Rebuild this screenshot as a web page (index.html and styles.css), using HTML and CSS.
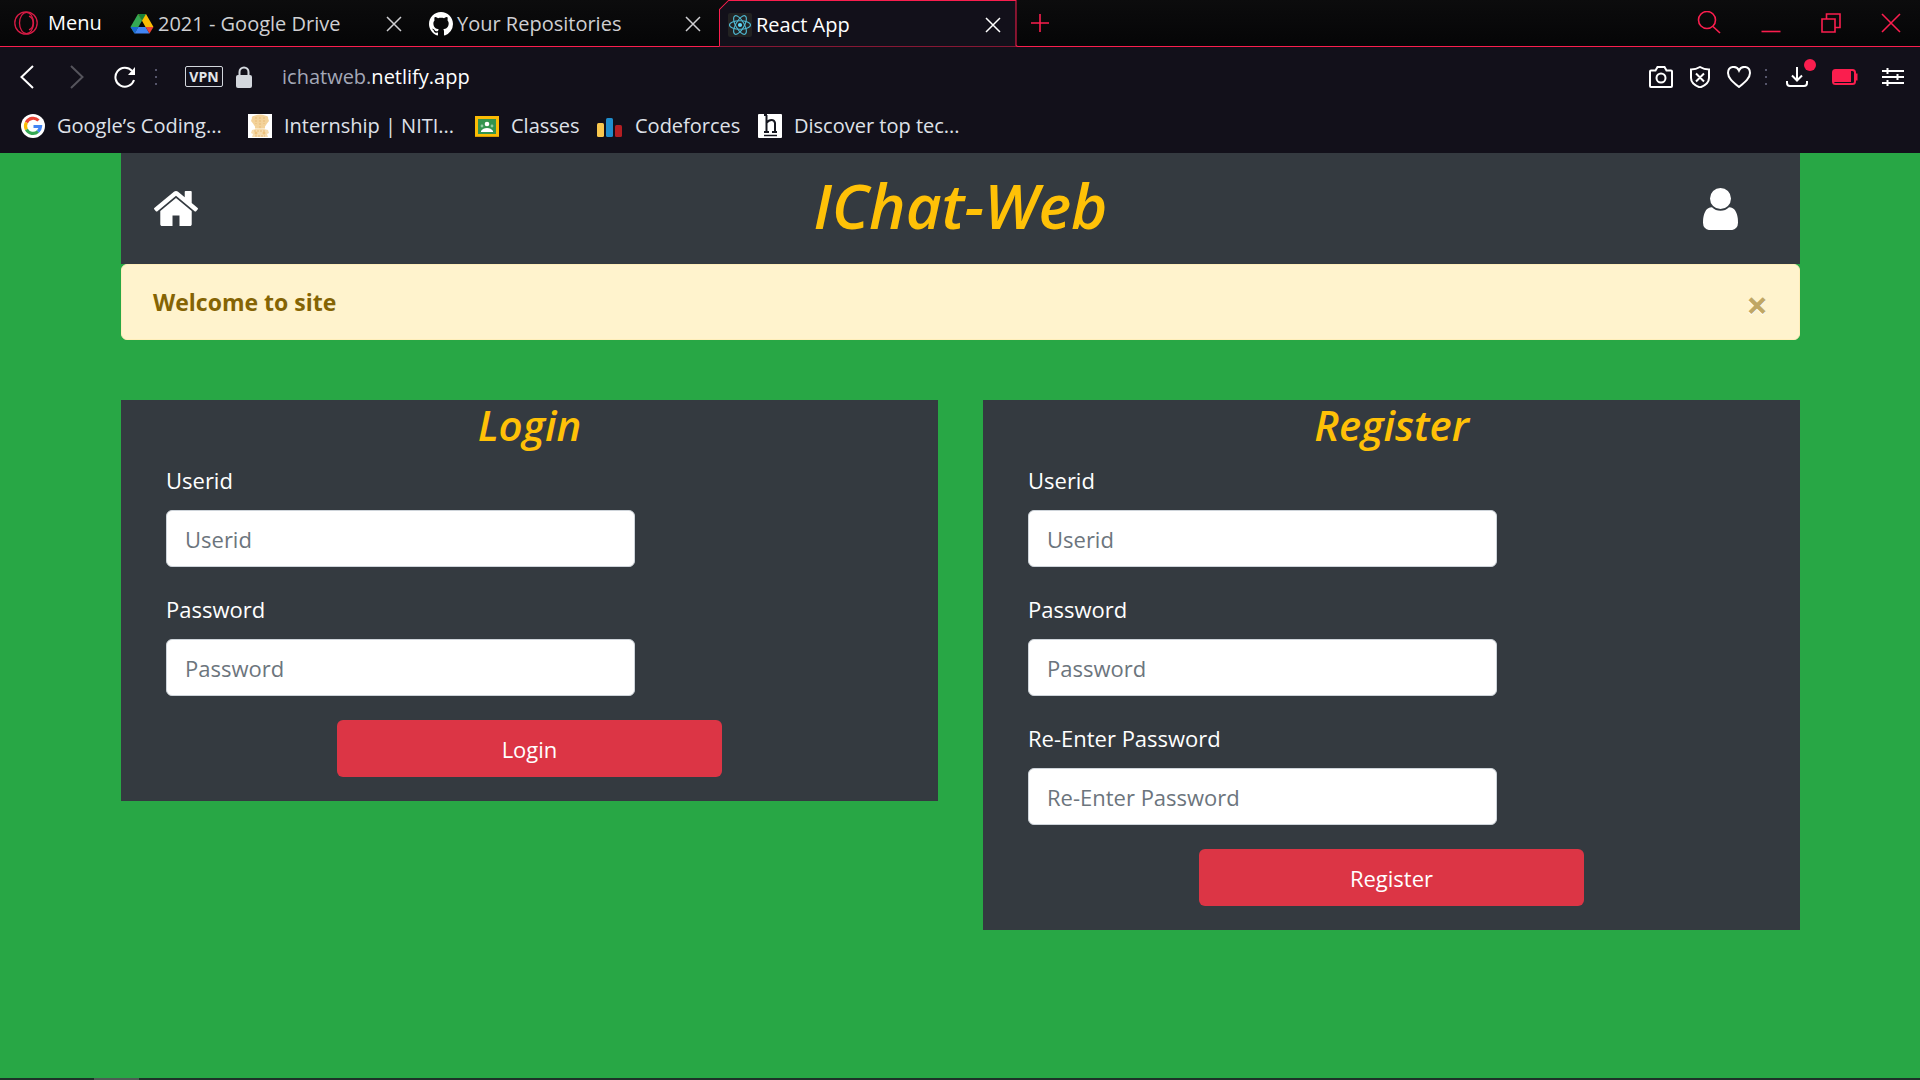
FILE: index.html
```html
<!DOCTYPE html>
<html lang="en">
<head>
<meta charset="utf-8">
<title>React App</title>
<link rel="stylesheet" href="styles.css">
</head>
<body>
<header class="browser">
  <div class="tabstrip">
    <button class="menu" type="button">
      <svg width="24" height="24" viewBox="0 0 24 24" fill="none" stroke="#d81b45" stroke-width="1.3"><circle cx="12" cy="12" r="11.2"/><ellipse cx="12.5" cy="12" rx="7" ry="10.6"/><path d="M15 5.2c5.500 2 5.500 11.600 0 13.600"/></svg>
      <span>Menu</span>
    </button>
    <div class="tab">
      <svg width="24" height="24" viewBox="0 0 24 24"><path d="M8 2h8l-4 6.800z" fill="#188038"/><path d="M8 2l4 6.800L4.500 21.500.500 15z" fill="#34a853"/><path d="M16 2l7.500 13h-8L12 8.800 8 2z" fill="#fbbc04"/><path d="M8 2h8l-4 6.800z" fill="#188038"/><path d="M8.300 15h7.300l3.900 6.500h-15z" fill="#4285f4"/><path d="M.5 15h7.800l-3.800 6.500z" fill="#1967d2"/><path d="M15.600 15h7.900l-4 6.500z" fill="#ea4335"/></svg>
      <span class="tab-title">2021 - Google Drive</span>
      <button class="tab-close" type="button" aria-label="Close tab"><svg width="16" height="16" viewBox="0 0 16 16"><path d="M1 1l14 14M15 1L1 15"/></svg></button>
    </div>
    <div class="tab">
      <svg width="24" height="24" viewBox="0 0 16 16" fill="#fff"><path d="M8 0C3.580 0 0 3.580 0 8c0 3.540 2.290 6.530 5.470 7.590.4.070.55-.17.55-.38 0-.19-.01-.82-.01-1.490-2.010.37-2.530-.49-2.690-.94-.09-.23-.48-.94-.82-1.130-.28-.15-.68-.52-.01-.53.63-.01 1.080.58 1.230.82.72 1.210 1.870.87 2.330.66.07-.52.28-.87.51-1.070-1.780-.2-3.640-.89-3.640-3.950 0-.87.31-1.590.82-2.150-.08-.2-.36-1.020.08-2.120 0 0 .67-.21 2.200.82.64-.18 1.320-.27 2-.27s1.360.09 2 .27c1.530-1.040 2.200-.82 2.200-.82.44 1.100.16 1.920.08 2.120.51.56.82 1.270.82 2.150 0 3.070-1.870 3.750-3.650 3.950.29.25.54.73.54 1.480 0 1.070-.01 1.930-.01 2.200 0 .21.15.46.55.38A8.010 8.010 0 0 0 16 8c0-4.420-3.580-8-8-8z"/></svg>
      <span class="tab-title">Your Repositories</span>
      <button class="tab-close" type="button" aria-label="Close tab"><svg width="16" height="16" viewBox="0 0 16 16"><path d="M1 1l14 14M15 1L1 15"/></svg></button>
    </div>
    <div class="tab tab-active">
      <svg class="tab-edge" viewBox="0 0 298 47" preserveAspectRatio="none" aria-hidden="true"><path d="M0 46.500V46.500l.5-1V9.500L9.500.500h286.500V45.500l1.500 1" fill="#12101a" stroke="#fa1e4e"/></svg>
      <svg width="24" height="24" viewBox="0 0 24 24" fill="none" stroke="#4fb9d3" stroke-width="1.100"><rect width="24" height="24" rx="2" fill="#222" stroke="none"/><ellipse cx="12" cy="12" rx="10.500" ry="4.200"/><ellipse cx="12" cy="12" rx="10.500" ry="4.200" transform="rotate(60 12 12)"/><ellipse cx="12" cy="12" rx="10.500" ry="4.200" transform="rotate(120 12 12)"/><circle cx="12" cy="12" r="2.100" fill="#61dafb" stroke="none"/></svg>
      <span class="tab-title">React App</span>
      <button class="tab-close" type="button" aria-label="Close tab"><svg width="16" height="16" viewBox="0 0 16 16"><path d="M1 1l14 14M15 1L1 15"/></svg></button>
    </div>
    <button class="new-tab" type="button" aria-label="New tab"><svg width="20" height="20" viewBox="0 0 20 20"><path d="M10 1v18M1 10h18"/></svg></button>
    <div class="window-controls">
      <button type="button" aria-label="Search tabs"><svg width="24" height="24" viewBox="0 0 24 24"><circle cx="10" cy="9" r="8.500"/><path d="M16 15.500l7 6.500"/></svg></button>
      <button type="button" aria-label="Minimize"><svg width="20" height="20" viewBox="0 0 20 20"><path d="M.5 18.500h19"/></svg></button>
      <button type="button" aria-label="Restore"><svg width="20" height="20" viewBox="0 0 20 20"><path d="M1 6h13v13H1zM5.500 6V1H19v13.500h-5"/></svg></button>
      <button type="button" aria-label="Close"><svg width="20" height="20" viewBox="0 0 20 20"><path d="M1 1l18 18M19 1L1 19"/></svg></button>
    </div>
  </div>

  <div class="toolbar">
    <button class="back" type="button" aria-label="Back"><svg width="14" height="24" viewBox="0 0 14 24"><path d="M13 1L1.500 12 13 23"/></svg></button>
    <button class="forward" type="button" aria-label="Forward"><svg width="14" height="24" viewBox="0 0 14 24"><path d="M1 1l11.500 11L1 23"/></svg></button>
    <button class="reload" type="button" aria-label="Reload"><svg width="22" height="22" viewBox="0 0 22 22"><path d="M18 4.800A9.500 9.500 0 1 0 20 14"/><path d="M21 1v8h-7z" fill="#fff" stroke="none"/></svg></button>
    <span class="dots"></span>
    <button class="vpn" type="button">VPN</button>
    <svg width="16" height="22" viewBox="0 0 16 22" fill="none"><rect y="9" width="16" height="13" rx="2" fill="#d3d7dd"/><path d="M3.500 10V6a4.500 4.500 0 0 1 9 0v4" stroke="#d3d7dd" stroke-width="2"/></svg>
    <a class="address" href="#">ichatweb.<span class="domain">netlify.app</span></a>
    <div class="tools">
      <button type="button" aria-label="Snapshot"><svg width="24" height="22" viewBox="0 0 24 22"><path d="M2 4.500h4.500L8.500 1h7l2 3.500H22q1 0 1 1V20q0 1-1 1H2q-1 0-1-1V5.500q0-1 1-1z"/><circle cx="12" cy="12" r="4.500"/></svg></button>
      <button type="button" aria-label="Ad blocker"><svg width="20" height="22" viewBox="0 0 20 22"><path d="M10 1q4 2.500 9 2.500V12q0 6-9 9.500Q1 18 1 12V3.500Q6 3.500 10 1zM6 7.500l8 8M14 7.500l-8 8"/></svg></button>
      <button type="button" aria-label="Bookmark"><svg width="24" height="22" viewBox="0 0 24 22"><path d="M12 21C6 16 1 12 1 7c0-7 8.500-8 11-2.500C14.500-1 23 0 23 7c0 5-5 9-11 14z"/></svg></button>
      <span class="dots"></span>
      <button class="downloads" type="button" aria-label="Downloads"><svg width="22" height="20" viewBox="0 0 22 20"><path d="M11 0v13M6 8.500l5 5 5-5M1 14v2q0 3 3 3h14q3 0 3-3v-2"/></svg></button>
      <button type="button" aria-label="Battery saver"><svg width="26" height="16" viewBox="0 0 26 16"><rect x="1" y="1" width="22" height="14" rx="2.500" stroke="#fa1e4e"/><path d="M2 2h17v11H2z" fill="#fa1e4e" stroke="none"/><path d="M24 4.500v7" stroke="#fa1e4e" stroke-width="3"/></svg></button>
      <button type="button" aria-label="Easy setup"><svg width="22" height="20" viewBox="0 0 22 20"><path d="M0 4h22M0 10h22M0 16h22M5.500 1v6M15.500 7v6M5.500 13v6"/></svg></button>
    </div>
  </div>

  <nav class="bookmarks" aria-label="Bookmarks">
    <a href="#"><svg width="24" height="24" viewBox="0 0 24 24" fill="none" stroke-width="3.200"><circle cx="12" cy="12" r="12" fill="#fff"/><path d="M17.500 6.500A7.500 7.500 0 0 0 5.400 8.500" stroke="#ea4335"/><path d="M5.400 8.500a7.500 7.500 0 0 0 0 7" stroke="#fbbc05"/><path d="M5.400 15.500a7.500 7.500 0 0 0 11.600 2" stroke="#34a853"/><path d="M17 17.500a7.500 7.500 0 0 0 2.500-5H12.500" stroke="#4285f4"/></svg><span>Google’s Coding...</span></a>
    <a href="#"><svg width="24" height="24" viewBox="0 0 24 24"><path fill="#fff" d="M0 0h24v24H0z"/><path fill="#f3d29a" d="M4 4q-1-2 3-2.500Q12-.5 17 1.500q4 .5 3 2.500l1 3-2 2.500-2 3v2H7v-2l-2-3L3 7z"/><path fill="#f6dcae" d="M4 16q8-3 16 0l1 3-2 1 1 3H4l1-3-2-1z"/><path d="M8 3v7M12 3v11M16 3v7M6 17h12M7 22h10" stroke="#e8bb78" stroke-dasharray="2 1" fill="none"/><circle cx="8" cy="19" r="1.500" fill="#eec17c"/><circle cx="16" cy="19" r="1.500" fill="#eec17c"/></svg><span>Internship | NITI...</span></a>
    <a href="#"><svg width="24" height="24" viewBox="0 0 24 24"><path fill="#fbbc04" d="M0 2h24v21H0z"/><path fill="#34944f" d="M3 5h18v15H3z"/><circle cx="12" cy="10" r="2.300" fill="#fff"/><circle cx="7" cy="12" r="1.400" fill="#8fcba0"/><circle cx="17" cy="12" r="1.400" fill="#8fcba0"/><path fill="#fff" d="M6 18v-1q2-3 6-3t6 3v1z"/><path fill="#d99a00" d="M0 22h24v1H0z"/></svg><span>Classes</span></a>
    <a href="#"><svg width="26" height="24" viewBox="0 0 26 24"><rect y="9" width="7" height="14" rx="1.500" fill="#f8c74e"/><rect x="9" y="4" width="7" height="19" rx="1.500" fill="#1f8dcc"/><rect x="18" y="11" width="7" height="12" rx="1.500" fill="#b41e22"/></svg><span>Codeforces</span></a>
    <a href="#"><svg width="24" height="24" viewBox="0 0 24 24" fill="none" stroke="#15161f"><rect width="24" height="24" rx="1" fill="#fff" stroke="none"/><path d="M6 1h3M8.500 1v17M6 18h5M8.500 9q2-3 5-3t3.500 3v9M14 18h5" stroke-width="2"/><path d="M6 21.500h13" stroke-width="1.500"/></svg><span>Discover top tec...</span></a>
  </nav>
</header>

<main class="page">
  <header class="site-header">
    <a href="#" aria-label="Home"><svg width="44" height="35" viewBox="26 253 1612 1283" fill="#fff"><path d="M1408 992v480q0 26-19 45t-45 19h-384v-384h-256v384h-384q-26 0-45-19t-19-45v-480q0-1 .5-3t.5-3l575-474 575 474q1 2 1 6zm223-69l-62 74q-8 9-21 11h-3q-13 0-21-7l-692-577-692 577q-12 8-24 7-13-2-21-11l-62-74q-8-10-7-23.500t11-21.500l719-599q32-26 76-26t76 26l244 204v-195q0-14 9-23t23-9h192q14 0 23 9t9 23v408l219 182q10 8 11 21.500t-7 23.500z"/></svg></a>
    <h1>IChat-Web</h1>
    <a class="account" href="#" aria-label="Account"><svg width="35" height="42" viewBox="0 128 1280 1536" fill="#fff"><path d="M1280 1399q0 109-62.500 187t-150.500 78h-854q-88 0-150.500-78t-62.500-187q0-85 8.500-160.500t31.500-152 58.500-131 94-89 134.500-34.500q131 128 313 128t313-128q76 0 134.500 34.500t94 89 58.500 131 31.500 152 8.500 160.500zm-256-887q0 159-112.500 271.500t-271.500 112.500-271.500-112.500-112.500-271.500 112.500-271.500 271.500-112.500 271.500 112.500 112.500 271.500z"/></svg></a>
  </header>

  <div class="alert" role="alert">
    <strong>Welcome to site</strong>
    <button class="alert-close" type="button" aria-label="Close">×</button>
  </div>

  <div class="cards">
    <form class="card">
      <h2>Login</h2>
      <div class="field"><label for="login-id">Userid</label><input id="login-id" type="text" placeholder="Userid"></div>
      <div class="field"><label for="login-pw">Password</label><input id="login-pw" type="password" placeholder="Password"></div>
      <button class="submit" type="button">Login</button>
    </form>
    <form class="card">
      <h2>Register</h2>
      <div class="field"><label for="reg-id">Userid</label><input id="reg-id" type="text" placeholder="Userid"></div>
      <div class="field"><label for="reg-pw">Password</label><input id="reg-pw" type="password" placeholder="Password"></div>
      <div class="field"><label for="reg-pw2">Re-Enter Password</label><input id="reg-pw2" type="password" placeholder="Re-Enter Password"></div>
      <button class="submit" type="button">Register</button>
    </form>
  </div>
</main>
<footer class="taskbar"><span class="taskbar-item"></span></footer>
</body>
</html>
```
FILE: styles.css
```css
* { box-sizing: border-box; }

body {
  margin: 0;
  min-height: 100vh;
  display: flex;
  flex-direction: column;
  background: #28a745;
  color: #fff;
  font-family: "Open Sans", "Noto Sans", sans-serif;
  font-size: 22px;
  line-height: 36px;
}

button {
  padding: 0;
  border: 0;
  background: none;
  color: inherit;
  font: inherit;
}

a { color: inherit; text-decoration: none; }
svg { display: block; flex: none; }

/* Browser window */
.browser {
  background: #12101a;
  font-size: 20px;
  line-height: 28px;
  white-space: nowrap;
}

.tabstrip {
  display: flex;
  height: 47px;
  background: linear-gradient(#0c0c0d, #050506);
  border-bottom: 1px solid #fa1e4e;
}

.menu {
  display: flex;
  align-items: center;
  gap: 10px;
  width: 121px;
  padding-left: 14px;
}

.tab {
  position: relative;
  display: flex;
  align-items: center;
  gap: 4px;
  width: 299px;
  padding: 2px 18px 0 9px;
  color: #cfcfd2;
}

.tab-active { height: 47px; padding-right: 17px; color: #fff; }
.tab-edge { position: absolute; inset: 0; width: 100%; height: 47px; }
.tab-active > :not(.tab-edge) { position: relative; }
.tab-title { flex: 1; }

.tab-close svg { fill: none; stroke: currentColor; stroke-width: 1.5; }

.new-tab { margin-left: 12px; }
.new-tab svg, .window-controls svg { fill: none; stroke: #fa1e4e; stroke-width: 1.6; }

.window-controls {
  display: flex;
  align-items: center;
  gap: 40px;
  margin-left: auto;
  padding-right: 19px;
}

.toolbar {
  display: flex;
  align-items: center;
  height: 59px;
  padding: 0 16px 0 20px;
}

.toolbar button svg { fill: none; stroke: #fff; stroke-width: 2; }
.toolbar .forward svg { stroke: #55545c; }
.forward { margin-left: 36px; }
.reload { margin-left: 30px; }

.dots {
  width: 2px;
  height: 16px;
  margin: 0 28px 0 19px;
  background: repeating-linear-gradient(#55546a 0 2px, transparent 2px 7px);
}

.vpn {
  width: 38px;
  height: 21px;
  margin-right: 13px;
  border: 1px solid #d3d7dd;
  border-radius: 2px;
  color: #e3e5e9;
  font-size: 14px;
  font-weight: 700;
  line-height: 18px;
}

.address { margin-left: 30px; color: #a4a8b8; }
.domain { color: #fff; }

.tools {
  display: flex;
  align-items: center;
  gap: 17px;
  margin-left: auto;
}

.tools .dots { margin: 0 2px 0 -3px; }
.downloads { position: relative; margin-right: 7px; }
.tools button:last-child { margin-left: 7px; }

.downloads::after {
  content: "";
  position: absolute;
  top: -8px;
  right: -8px;
  width: 12px;
  height: 12px;
  border-radius: 50%;
  background: #fa1e4e;
}

.bookmarks {
  display: grid;
  grid-template-columns: 227px 227px 122px 161px auto;
  align-items: center;
  height: 47px;
  padding: 0 0 8px 21px;
  color: #dfe1e8;
}

.bookmarks a { display: flex; align-items: center; gap: 12px; }

/* Site */
.page { flex: 1; padding: 0 120px 0 121px; }

.site-header {
  display: grid;
  grid-template-columns: 1fr auto 1fr;
  align-items: center;
  height: 111px;
  padding: 0 62px 0 33px;
  background: #343a40;
}

.account { justify-self: end; }

h1, h2 {
  margin: 0;
  color: #ffc107;
  font-style: italic;
  font-weight: 600;
  text-align: center;
}

h1 { font-size: 62px; line-height: 72px; padding: 0 0 8px 29px; }
h2 { font-size: 42px; line-height: 50px; margin-bottom: 12px; }

.alert {
  display: flex;
  align-items: center;
  justify-content: space-between;
  height: 76px;
  padding: 0 31px;
  border: 1px solid #ffeeba;
  border-radius: 6px;
  background: #fff3cd;
  color: #856404;
  font-size: 23px;
}

.alert-close {
  padding-top: 4px;
  color: #c0a764;
  font-size: 38px;
  font-weight: 700;
  text-shadow: 0 1px 0 #fff;
}

.cards {
  display: grid;
  grid-template-columns: 1fr 1fr;
  align-items: start;
  gap: 45px;
  padding-top: 60px;
}

.card { padding: 0 45px 24px; background: #343a40; }

.field {
  display: flex;
  flex-direction: column;
  gap: 12px;
  width: 64.5%;
  margin-bottom: 24px;
}

.field input {
  width: 100%;
  height: 57px;
  padding: 0 18px;
  border: 1px solid #ced4da;
  border-radius: 6px;
  background: #fff;
  color: #495057;
  font: inherit;
}

.field input::placeholder { color: #6c757d; opacity: 1; }

.submit {
  display: block;
  width: 53%;
  height: 57px;
  margin: 0 auto;
  border-radius: 6px;
  background: #dc3545;
}

.taskbar { height: 2px; padding-left: 94px; background: #1d3128; }
.taskbar-item { display: block; width: 45px; height: 2px; background: #4c5c53; }
```
